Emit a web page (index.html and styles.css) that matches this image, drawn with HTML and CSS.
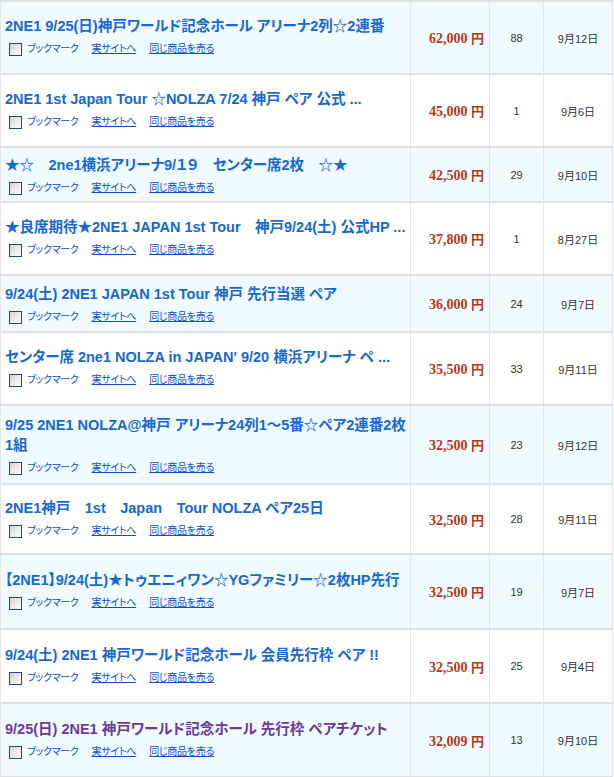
FILE: index.html
```html
<!DOCTYPE html>
<html lang="ja">
<head>
<meta charset="utf-8">
<title>2NE1 チケット一覧</title>
<link rel="stylesheet" href="styles.css">
</head>
<body>
<table class="list">
  <colgroup>
    <col class="c-title"><col class="c-price"><col class="c-count"><col class="c-date">
  </colgroup>
  <tbody>
    <tr class="odd h73">
      <td class="title"><a class="name" href="#">2NE1 9/25(日)神戸ワールド記念ホール アリーナ2列☆2連番</a>
        <div class="acts"><span class="cb"></span><a class="bm" href="#">ブックマーク</a><a href="#">実サイトへ</a><a href="#">同じ商品を売る</a></div></td>
      <td class="price">62,000 <span class="yen">円</span></td><td class="num">88</td><td class="num">9月12日</td>
    </tr>
    <tr class="even h73">
      <td class="title"><a class="name" href="#">2NE1 1st Japan Tour ☆NOLZA 7/24 神戸 ペア 公式 ...</a>
        <div class="acts"><span class="cb"></span><a class="bm" href="#">ブックマーク</a><a href="#">実サイトへ</a><a href="#">同じ商品を売る</a></div></td>
      <td class="price">45,000 <span class="yen">円</span></td><td class="num">1</td><td class="num">9月6日</td>
    </tr>
    <tr class="odd h55">
      <td class="title"><a class="name" href="#">★☆　2ne1横浜アリーナ9/１９　センター席2枚　☆★</a>
        <div class="acts"><span class="cb"></span><a class="bm" href="#">ブックマーク</a><a href="#">実サイトへ</a><a href="#">同じ商品を売る</a></div></td>
      <td class="price">42,500 <span class="yen">円</span></td><td class="num">29</td><td class="num">9月10日</td>
    </tr>
    <tr class="even h73">
      <td class="title"><a class="name" href="#">★良席期待★2NE1 JAPAN 1st Tour　神戸9/24(土) 公式HP ...</a>
        <div class="acts"><span class="cb"></span><a class="bm" href="#">ブックマーク</a><a href="#">実サイトへ</a><a href="#">同じ商品を売る</a></div></td>
      <td class="price">37,800 <span class="yen">円</span></td><td class="num">1</td><td class="num">8月27日</td>
    </tr>
    <tr class="odd h57">
      <td class="title"><a class="name" href="#">9/24(土) 2NE1 JAPAN 1st Tour 神戸 先行当選 ペア</a>
        <div class="acts"><span class="cb"></span><a class="bm" href="#">ブックマーク</a><a href="#">実サイトへ</a><a href="#">同じ商品を売る</a></div></td>
      <td class="price">36,000 <span class="yen">円</span></td><td class="num">24</td><td class="num">9月7日</td>
    </tr>
    <tr class="even h73">
      <td class="title"><a class="name" href="#">センター席 2ne1 NOLZA in JAPAN' 9/20 横浜アリーナ ペ ...</a>
        <div class="acts"><span class="cb"></span><a class="bm" href="#">ブックマーク</a><a href="#">実サイトへ</a><a href="#">同じ商品を売る</a></div></td>
      <td class="price">35,500 <span class="yen">円</span></td><td class="num">33</td><td class="num">9月11日</td>
    </tr>
    <tr class="odd h79">
      <td class="title"><a class="name" href="#">9/25 2NE1 NOLZA@神戸 アリーナ24列1～5番☆ペア2連番2枚<br>1組</a>
        <div class="acts"><span class="cb"></span><a class="bm" href="#">ブックマーク</a><a href="#">実サイトへ</a><a href="#">同じ商品を売る</a></div></td>
      <td class="price">32,500 <span class="yen">円</span></td><td class="num">23</td><td class="num">9月12日</td>
    </tr>
    <tr class="even h70">
      <td class="title"><a class="name" href="#">2NE1神戸　1st　Japan　Tour NOLZA ペア25日</a>
        <div class="acts"><span class="cb"></span><a class="bm" href="#">ブックマーク</a><a href="#">実サイトへ</a><a href="#">同じ商品を売る</a></div></td>
      <td class="price">32,500 <span class="yen">円</span></td><td class="num">28</td><td class="num">9月11日</td>
    </tr>
    <tr class="odd h75">
      <td class="title"><a class="name" href="#">【2NE1】9/24(土)★トゥエニィワン☆YGファミリー☆2枚HP先行</a>
        <div class="acts"><span class="cb"></span><a class="bm" href="#">ブックマーク</a><a href="#">実サイトへ</a><a href="#">同じ商品を売る</a></div></td>
      <td class="price">32,500 <span class="yen">円</span></td><td class="num">19</td><td class="num">9月7日</td>
    </tr>
    <tr class="even h74">
      <td class="title"><a class="name" href="#">9/24(土) 2NE1 神戸ワールド記念ホール 会員先行枠 ペア !!</a>
        <div class="acts"><span class="cb"></span><a class="bm" href="#">ブックマーク</a><a href="#">実サイトへ</a><a href="#">同じ商品を売る</a></div></td>
      <td class="price">32,500 <span class="yen">円</span></td><td class="num">25</td><td class="num">9月4日</td>
    </tr>
    <tr class="odd h74">
      <td class="title"><a class="name visited" href="#">9/25(日) 2NE1 神戸ワールド記念ホール 先行枠 ペアチケット</a>
        <div class="acts"><span class="cb"></span><a class="bm" href="#">ブックマーク</a><a href="#">実サイトへ</a><a href="#">同じ商品を売る</a></div></td>
      <td class="price">32,009 <span class="yen">円</span></td><td class="num">13</td><td class="num">9月10日</td>
    </tr>
  </tbody>
</table>
</body>
</html>
```
FILE: styles.css
```css
html, body {
  margin: 0;
  padding: 0;
  background: #ffffff;
}
body {
  font-family: "Liberation Sans", "Noto Sans CJK JP", sans-serif;
  color: #333333;
}
.list {
  border-collapse: collapse;
  width: 613px;
  table-layout: fixed;
  border-top: 2px solid #e2e2e2;
  border-left: 1px solid #e6e6e6;
  border-right: 1px solid #e6e6e6;
}
.c-title { width: 410px; }
.c-price { width: 79px; }
.c-count { width: 54px; }
.c-date { width: 69px; }
.list td {
  border-bottom: 2px solid #e0e0e0;
  border-left: 1px solid #e6e6e6;
  vertical-align: middle;
  padding: 0;
}
.odd td { background: #f0fbff; }
.even td { background: #ffffff; }
.list td.title {
  padding: 14px 2px 16px 4px;
  text-align: left;
}
.h70 td.title { padding-top: 13px; padding-bottom: 14px; }
.h74 td.title { padding-top: 15px; padding-bottom: 16px; }
.h75 td.title { padding-top: 15px; padding-bottom: 17px; }
.h55 td.title { padding-top: 7px; padding-bottom: 5px; }
.h57 td.title { padding-top: 8px; padding-bottom: 6px; }
.h79 td.title { padding-top: 9px; padding-bottom: 7px; }
.name {
  display: block;
  font-size: 14.5px;
  font-weight: bold;
  line-height: 20px;
  color: #1769cf;
  text-decoration: none;
  font-feature-settings: "palt";
  white-space: nowrap;
}
.name.visited { color: #6a3a9b; }
.acts {
  display: flex;
  align-items: center;
  margin-top: 5px;
  height: 16px;
  padding-left: 4px;
  font-size: 10px;
  letter-spacing: -0.3px;
  font-feature-settings: "palt";
}
.acts a {
  color: #0b4fc7;
  text-decoration: underline;
  margin-right: 13px;
  line-height: 14px;
}
.acts a.bm { text-decoration: none; }
.cb {
  box-sizing: border-box;
  width: 13px;
  height: 13px;
  border: 1px solid #1d4a79;
  background: linear-gradient(135deg, #d4d4d0 0%, #ececea 55%, #fbfbfb 100%);
  margin-right: 5px;
  flex: none;
}
.list td.price {
  text-align: right;
  padding-right: 5px;
  font-family: "Liberation Serif", "Noto Sans CJK JP", serif;
  font-weight: bold;
  font-size: 14px;
  color: #b2381a;
  white-space: nowrap;
}
.yen {
  font-family: "Noto Sans CJK JP", sans-serif;
  font-size: 13px;
}
.num {
  text-align: center;
  font-size: 11px;
  color: #333333;
}
```
